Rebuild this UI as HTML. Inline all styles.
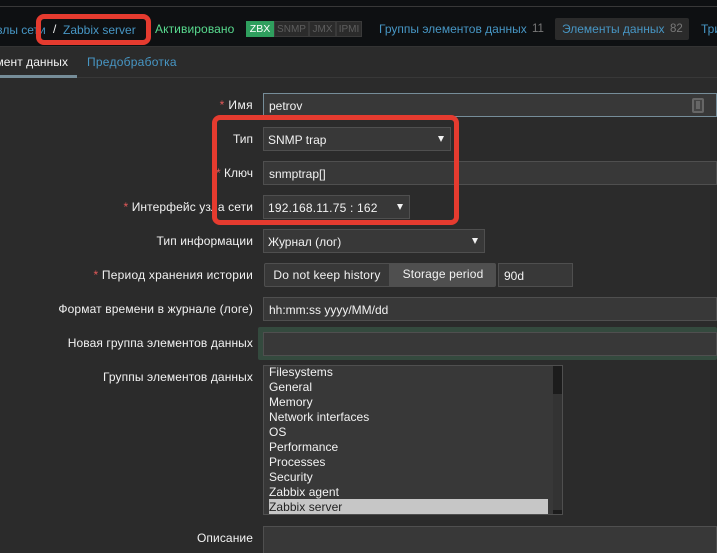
<!DOCTYPE html>
<html><head><meta charset="utf-8">
<style>
html,body{margin:0;padding:0;background:#2b2b2b;}
#p{position:relative;width:717px;height:553px;overflow:hidden;background:#2b2b2b;font:12px/14px "Liberation Sans","Noto Sans CJK SC",sans-serif;color:#f2f2f2;}
#p div{position:absolute;box-sizing:border-box;white-space:nowrap;}
.l{right:464px;text-align:right;color:#f2f2f2;}
.s{color:#e45959;}
.b{color:#4796c4;}
.i{background:#383838;border:1px solid #4f4f4f;padding:0 0 0 5px;line-height:24px;height:24px;}
.c{background:#383838;border:1px solid #4f4f4f;padding-left:4px;line-height:24px;height:24px;}
.a{width:0;height:0;border-left:3.5px solid transparent;border-right:3.5px solid transparent;border-top:6px solid #f2f2f2;}
.g{color:#5e5e5e;background:#2b2b2b;border:1px solid #3a3a3a;height:16px;top:21px;line-height:15px;text-align:center;font-size:10px;}
.o{left:269px;line-height:15px;height:15px;letter-spacing:.05px;}
.r{position:absolute;border:5px solid #e53b2f;border-radius:8px;}
</style></head><body><div id="p">
<div style="left:0;top:0;width:717px;height:46px;background:#0e1012"></div>
<div style="left:0;top:6px;width:717px;height:1px;background:#383838"></div>
<div style="left:0;top:46px;width:717px;height:1px;background:#333"></div>

<div class="b" style="left:-10px;top:23px">Узлы сети</div>
<div style="left:53px;top:22px;color:#f2f2f2">/</div>
<div class="b" style="left:63px;top:23px;">Zabbix server</div>
<div style="left:155px;top:22px;color:#59db8f;letter-spacing:.1px">Активировано</div>
<div style="left:246px;top:21px;width:28px;height:16px;background:#2f9f5e;color:#fff;text-align:center;line-height:16px;font-size:10.5px">ZBX</div>
<div class="g" style="left:274px;width:35px">SNMP</div>
<div class="g" style="left:309px;width:27px">JMX</div>
<div class="g" style="left:336px;width:26px">IPMI</div>
<div class="b" style="left:379px;top:22px;">Группы элементов данных</div>
<div style="left:532px;top:22px;color:#787878;font-size:11.5px">11</div>
<div style="left:555px;top:18px;width:134px;height:22px;background:#2b2b2b;border-radius:2px"></div>
<div class="b" style="left:562px;top:22px;">Элементы данных</div>
<div style="left:670px;top:22px;color:#787878;font-size:11.5px">82</div>
<div class="b" style="left:701px;top:22px">Триггеры</div>

<div style="left:-30px;top:55px;color:#f2f2f2;letter-spacing:.05px;width:98px;text-align:right">Элемент данных</div>
<div class="b" style="left:87px;top:55px;letter-spacing:.25px">Предобработка</div>
<div style="left:0;top:77px;width:717px;height:1px;background:#383838"></div>
<div style="left:0;top:75px;width:77px;height:3px;background:#768d99"></div>

<div class="l" style="top:98px;letter-spacing:.4px"><span class="s">*</span> Имя</div>
<div class="i" style="left:263px;top:93px;width:454px;border-color:#768d99">petrov</div>
<div style="left:692px;top:98px;width:12px;height:15px;border:2px solid #666;border-radius:2px;background:#444"></div>
<div style="left:696px;top:101px;width:4px;height:8px;background:#666"></div>

<div class="l" style="top:132px">Тип</div>
<div class="c" style="left:263px;top:127px;width:188px">SNMP trap</div>
<div class="a" style="left:438px;top:136px"></div>

<div class="l" style="top:166px"><span class="s">*</span> Ключ</div>
<div class="i" style="left:263px;top:161px;width:454px">snmptrap[]</div>

<div class="l" style="top:200px;letter-spacing:.1px"><span class="s">*</span> Интерфейс узла сети</div>
<div class="c" style="left:263px;top:195px;width:147px;letter-spacing:.2px">192.168.11.75 : 162</div>
<div class="a" style="left:397px;top:204px"></div>

<div class="l" style="top:234px;letter-spacing:.1px">Тип информации</div>
<div class="c" style="left:263px;top:229px;width:222px">Журнал (лог)</div>
<div class="a" style="left:472px;top:238px"></div>

<div class="l" style="top:268px;letter-spacing:.22px"><span class="s">*</span> Период хранения истории</div>
<div style="left:264px;top:263px;width:126px;height:24px;background:#383838;border:1px solid #4f4f4f;border-radius:2px 0 0 2px;text-align:center;line-height:22px;letter-spacing:.2px">Do not keep history</div>
<div style="left:390px;top:263px;width:106px;height:24px;background:#4f4f4f;border-radius:0 2px 2px 0;text-align:center;line-height:23px;letter-spacing:.15px">Storage period</div>
<div class="i" style="left:498px;top:263px;width:75px">90d</div>

<div class="l" style="top:302px;letter-spacing:.13px">Формат времени в журнале (логе)</div>
<div class="i" style="left:263px;top:297px;width:454px">hh:mm:ss yyyy/MM/dd</div>

<div style="left:258px;top:327px;width:459px;height:33px;background:#344a3e;border-radius:2px"></div>
<div class="l" style="top:336px;letter-spacing:.1px">Новая группа элементов данных</div>
<div class="i" style="left:263px;top:332px;width:454px;height:24px"></div>

<div class="l" style="top:370px;letter-spacing:.1px">Группы элементов данных</div>
<div style="left:263px;top:365px;width:300px;height:150px;background:#383838;border:1px solid #4f4f4f"></div>
<div style="left:269px;top:499px;width:279px;height:15px;background:#c6c6c6"></div>
<div class="o" style="top:365px;height:14px">Filesystems</div>
<div class="o" style="top:380px">General</div>
<div class="o" style="top:395px">Memory</div>
<div class="o" style="top:410px">Network interfaces</div>
<div class="o" style="top:425px">OS</div>
<div class="o" style="top:440px">Performance</div>
<div class="o" style="top:455px">Processes</div>
<div class="o" style="top:470px">Security</div>
<div class="o" style="top:485px">Zabbix agent</div>
<div class="o" style="top:500px;color:#222;height:14px">Zabbix server</div>
<div style="left:553px;top:366px;width:9px;height:148px;background:#333"></div>
<div style="left:553px;top:366px;width:9px;height:28px;background:#1c1c1c"></div>
<div style="left:553px;top:510px;width:9px;height:4px;background:#1c1c1c"></div>

<div class="l" style="top:531px;letter-spacing:.1px">Описание</div>
<div class="i" style="left:263px;top:526px;width:454px;height:40px"></div>

<div class="r" style="left:36px;top:14px;width:115px;height:31px"></div>
<div class="r" style="left:212px;top:115px;width:247px;height:110px"></div>
</div></body></html>
